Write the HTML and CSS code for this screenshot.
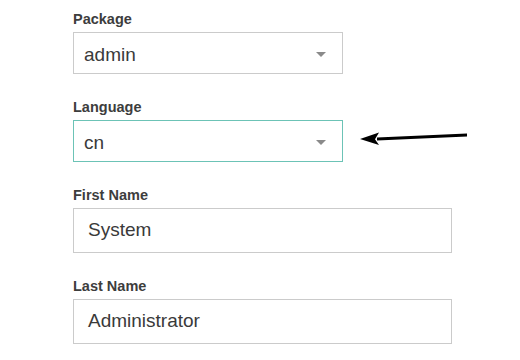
FILE: index.html
```html
<!DOCTYPE html>
<html>
<head>
<meta charset="utf-8">
<link rel="stylesheet" href="styles.css">
</head>
<body>
<form class="form">
  <div class="field">
    <div class="label">Package</div>
    <div class="select"><span class="value">admin</span><span class="caret"></span></div>
  </div>
  <div class="field field-lang">
    <div class="label">Language</div>
    <div class="select select-active"><span class="value">cn</span><span class="caret"></span></div>
    <svg class="pointer" width="120" height="24" viewBox="0 0 120 24">
      <path d="M17 6.5 L107 2.5 L107 5.5 L17 9.5 Z" fill="#000"/>
      <path d="M0 8 L19 1.5 L15 8.2 L19 14 Z" fill="#000"/>
    </svg>
  </div>
  <div class="field">
    <div class="label">First Name</div>
    <div class="input"><span class="value">System</span></div>
  </div>
  <div class="field">
    <div class="label">Last Name</div>
    <div class="input"><span class="value">Administrator</span></div>
  </div>
</form>
</body>
</html>
```
FILE: styles.css
```css
html, body {
  margin: 0;
  padding: 0;
  background: #fff;
}
body {
  font-family: "Liberation Sans", Arial, sans-serif;
  color: #333;
}
.form {
  padding: 10px 0 0 73px;
}
.field {
  margin-bottom: 24px;
}
.field-lang {
  position: relative;
}
.label {
  font-size: 14.5px;
  font-weight: bold;
  line-height: 17px;
  color: #3d3d3d;
  padding-top: 1px;
  margin-bottom: 4px;
}
.select {
  box-sizing: border-box;
  width: 270px;
  height: 42px;
  border: 1px solid #cbcbcb;
  display: flex;
  align-items: center;
  justify-content: space-between;
  padding: 3px 16px 0 10px;
}
.select-active {
  border-color: #6cc3b6;
}
.value {
  font-size: 19px;
  color: #3a3a3a;
}
.caret {
  width: 0;
  height: 0;
  border-left: 5.5px solid transparent;
  border-right: 5.5px solid transparent;
  border-top: 5px solid #8a8a8a;
}
.input {
  box-sizing: border-box;
  width: 379px;
  height: 45px;
  border: 1px solid #cbcbcb;
  display: flex;
  align-items: center;
  padding: 0 14px 2px;
}
.pointer {
  position: absolute;
  left: 287px;
  top: 33px;
}
```
